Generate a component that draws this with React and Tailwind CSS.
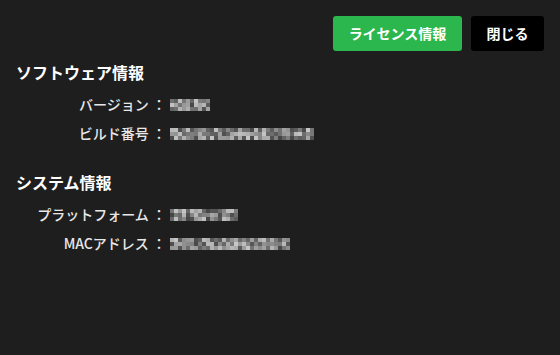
import React from 'react';

const font = { fontFamily: '"Noto Sans CJK JP", "Noto Sans", sans-serif' };

// mosaic placeholder for masked values
function Mosaic({ width, seed }) {
  const cols = Math.floor(width / 4);
  let s = seed;
  const cells = [];
  for (let r = 0; r < 3; r++) {
    for (let c = 0; c < cols; c++) {
      s = (s * 9301 + 49297) % 233280;
      const v = 70 + Math.floor((s / 233280) * 130);
      cells.push(<span key={r + '-' + c} className="block w-[4px] h-[4px]" style={{ background: `rgb(${v},${v},${v})` }} />);
    }
  }
  return (
    <span className="grid" style={{ gridTemplateColumns: `repeat(${cols}, 4px)`, width: cols * 4 }}>
      {cells}
    </span>
  );
}

function Row({ label, width, seed }) {
  return (
    <div className="flex items-center h-[29px]">
      <div className="w-[152px] text-right text-[14px] font-medium text-[#e8e8e8] pr-[2px]">{label} ：</div>
      <div className="pl-[2px]">
        <Mosaic width={width} seed={seed} />
      </div>
    </div>
  );
}

export default function App() {
  return (
    <div className="w-[560px] h-[355px] bg-[#1e1e1e] px-4 pt-4" style={font}>
      <div className="flex justify-end gap-[9px]">
        <button className="h-[35px] w-[129px] rounded-[3px] bg-[#2bb74d] text-white text-[14px] font-bold">
          ライセンス情報
        </button>
        <button className="h-[35px] w-[73px] rounded-[3px] bg-black text-white text-[14px] font-bold">
          閉じる
        </button>
      </div>
      <h2 className="mt-[1px] text-[16px] font-bold text-white leading-[40px]">ソフトウェア情報</h2>
      <div className="mt-[-2px]">
        <Row label="バージョン" width={40} seed={3} />
        <Row label="ビルド番号" width={145} seed={17} />
      </div>
      <h2 className="mt-[24px] text-[16px] font-bold text-white leading-[20px]">システム情報</h2>
      <div className="mt-[8px]">
        <Row label="プラットフォーム" width={70} seed={29} />
        <Row label="MACアドレス" width={120} seed={41} />
      </div>
    </div>
  );
}
